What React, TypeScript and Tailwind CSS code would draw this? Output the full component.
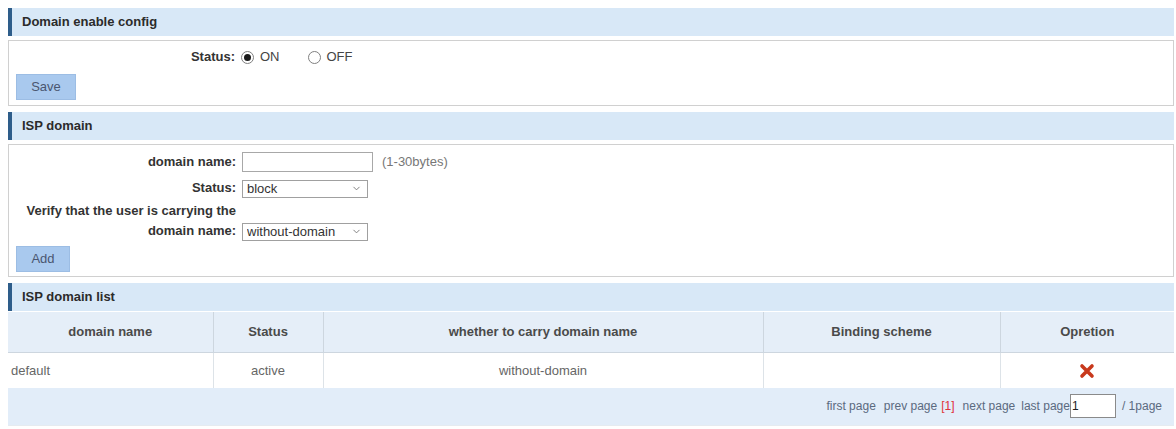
import { ChevronDown } from 'lucide-react';

function SectionHeader({ title }: { title: string }) {
  return (
    <div className="h-[28px] flex items-center bg-[#d8e8f7] border-l-4 border-[#2e5d8a] pl-[10px] text-[13px] font-bold text-[#2b2b2b]">
      {title}
    </div>
  );
}

function Radio({ checked }: { checked?: boolean }) {
  return (
    <span className="w-[13px] h-[13px] rounded-full border border-[#808080] bg-white flex items-center justify-center">
      {checked && <span className="w-[7px] h-[7px] rounded-full bg-[#1a1a1a]" />}
    </span>
  );
}

function FakeSelect({ value, width }: { value: string; width: string }) {
  return (
    <div className={`relative h-[18px] ${width}`}>
      <select
        defaultValue={value}
        className="appearance-none w-full h-full border border-[#a0a0a0] bg-white pl-[4px] text-[13px] leading-[16px] text-[#333] outline-none"
      >
        <option value={value}>{value}</option>
      </select>
      <ChevronDown className="pointer-events-none absolute right-[6px] top-[4px] w-[11px] h-[11px] text-[#777]" strokeWidth={2} />
    </div>
  );
}

function FormRow({ label, children, twoLine }: { label: React.ReactNode; children: React.ReactNode; twoLine?: boolean }) {
  return (
    <div className={`flex ${twoLine ? 'items-end' : 'items-center'}`}>
      <div className="w-[220px] text-right font-bold text-[13px] leading-[20px] text-[#333]">{label}</div>
      <div className={`ml-[6px] flex items-center ${twoLine ? 'mb-[1px]' : ''}`}>{children}</div>
    </div>
  );
}

function BlueButton({ children, width }: { children: React.ReactNode; width: string }) {
  return (
    <button className={`h-[26px] ${width} bg-[#a9c9ee] border border-[#9cbde4] text-[13px] text-[#4a5670]`}>
      {children}
    </button>
  );
}

export default function App() {
  return (
    <div className="w-[1176px] h-[429px] bg-white pt-2 pl-2 font-['Liberation_Sans',Arial,sans-serif] text-[13px] text-[#333]">
      <div className="w-[1166px] flex flex-col">
        <SectionHeader title="Domain enable config" />
        <div className="mt-1 border border-[#d0d0d0] pt-[7px] pb-[5px] px-[7px]">
          <div className="flex items-center h-[18px]">
            <span className="w-[219px] text-right font-bold text-[13px]">Status:</span>
            <label className="ml-[6px] flex items-center gap-[6px] text-[13px] text-[#444]">
              <Radio checked />
              ON
            </label>
            <label className="ml-[28px] flex items-center gap-[6px] text-[13px] text-[#444]">
              <Radio />
              OFF
            </label>
          </div>
          <div className="mt-[8px]">
            <BlueButton width="w-[60px]">Save</BlueButton>
          </div>
        </div>

        <div className="mt-[6px]">
          <SectionHeader title="ISP domain" />
        </div>
        <div className="mt-1 border border-[#d0d0d0] pt-[7px] pb-[4px] px-[7px] flex flex-col">
          <FormRow label="domain name:">
            <input className="w-[131px] h-[20px] border border-[#a8a8a8] bg-white outline-none" />
            <span className="ml-[9px] text-[#777]">(1-30bytes)</span>
          </FormRow>
          <div className="mt-[6px]">
            <FormRow label="Status:">
              <FakeSelect value="block" width="w-[126px]" />
            </FormRow>
          </div>
          <div className="mt-[3px]">
            <FormRow twoLine label={<>Verify that the user is carrying the<br />domain name:</>}>
              <FakeSelect value="without-domain" width="w-[126px]" />
            </FormRow>
          </div>
          <div className="mt-[5px]">
            <BlueButton width="w-[54px]">Add</BlueButton>
          </div>
        </div>

        <div className="mt-[6px]">
          <SectionHeader title="ISP domain list" />
        </div>
        <table className="mt-[1px] w-full border-collapse table-fixed text-[13px]">
          <colgroup>
            <col className="w-[205px]" />
            <col className="w-[110px]" />
            <col className="w-[440px]" />
            <col className="w-[237px]" />
            <col className="w-[174px]" />
          </colgroup>
          <thead>
            <tr className="h-[40px] bg-[#e5eef8] text-[#4a4a4a]">
              <th className="border-r border-b border-[#cdd6df] font-bold">domain name</th>
              <th className="border-r border-b border-[#cdd6df] font-bold">Status</th>
              <th className="border-r border-b border-[#cdd6df] font-bold">whether to carry domain name</th>
              <th className="border-r border-b border-[#cdd6df] font-bold">Binding scheme</th>
              <th className="border-b border-[#cdd6df] font-bold">Opretion</th>
            </tr>
          </thead>
          <tbody>
            <tr className="h-[36px] bg-white text-[#666]">
              <td className="border-r border-[#dde3e8] pl-[3px]">default</td>
              <td className="border-r border-[#dde3e8] text-center">active</td>
              <td className="border-r border-[#dde3e8] text-center">without-domain</td>
              <td className="border-r border-[#dde3e8]" />
              <td className="text-center">
                <svg viewBox="0 0 16 16" className="inline-block w-[16px] h-[16px]">
                  <path d="M3 3 L13 13 M13 3 L3 13" stroke="#c8391c" strokeWidth="3.6" strokeLinecap="round" />
                </svg>
              </td>
            </tr>
            <tr className="h-[37px] bg-[#e2edf9] border-b border-[#e6ebf0]">
              <td colSpan={5} className="text-right pr-[12px] text-[12px] text-[#5b6a80]">
                <span className="inline-flex items-center">
                  <span>first page</span>
                  <span className="ml-[8px]">prev page</span>
                  <span className="ml-[4px] text-[#e0313a]">[1]</span>
                  <span className="ml-[8px]">next page</span>
                  <span className="ml-[6px]">last page</span>
                  <input defaultValue="1" className="w-[46px] h-[24px] border border-[#8a8a8a] bg-white text-[12px] text-[#222] pl-[1px] outline-none" />
                  <span className="ml-[6px]">/ 1page</span>
                </span>
              </td>
            </tr>
          </tbody>
        </table>
      </div>
    </div>
  );
}
